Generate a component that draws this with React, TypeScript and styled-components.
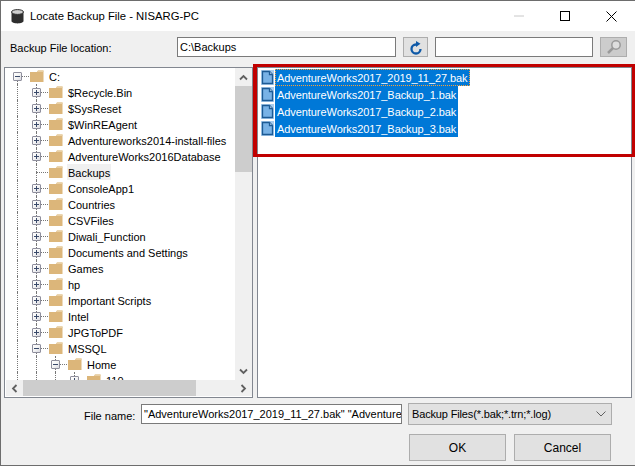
import React from "react";
import styled, { createGlobalStyle } from "styled-components";

const Global = createGlobalStyle`
  html, body { margin: 0; padding: 0; background: #f0f0f0; }
  * { box-sizing: border-box; }
`;

const Window = styled.div`
  position: relative;
  width: 635px;
  height: 466px;
  background: #f0f0f0;
  border: 1px solid #6d6d6d;
  border-right: 0;
  font-family: "Liberation Sans", Arial, sans-serif;
  font-size: 11px;
  color: #000;
  display: flex;
  flex-direction: column;
  overflow: hidden;
`;

const TitleBar = styled.div`
  height: 30px;
  background: #fff;
  display: flex;
  align-items: center;
  padding-left: 10px;
  flex: none;
`;
const TitleText = styled.span`
  margin-left: 6px;
  font-size: 11.3px;
`;
const WinButtons = styled.div`
  margin-left: auto;
  margin-right: 1px;
  display: flex;
  align-items: center;
`;
const WinBtn = styled.div`
  width: 46px;
  height: 30px;
  display: flex;
  align-items: center;
  justify-content: center;
`;

const LocationRow = styled.div`
  height: 36px;
  display: flex;
  align-items: center;
  padding: 0 0 4px 9px;
  flex: none;
`;
const Label = styled.span`
  width: 167px;
  flex: none;
  margin-top: 2px;
`;
const TextInput = styled.div<{ $w: number }>`
  width: ${(p) => p.$w}px;
  height: 20px;
  flex: none;
  background: #fff;
  border: 1px solid #7a7a7a;
  line-height: 18px;
  padding-left: 2px;
  white-space: nowrap;
  overflow: hidden;
`;
const IconBtn = styled.div<{ $w: number; $ml: number; $mr: number; $bg: string }>`
  width: ${(p) => p.$w}px;
  height: 20px;
  margin: 0 ${(p) => p.$mr}px 0 ${(p) => p.$ml}px;
  flex: none;
  background: ${(p) => p.$bg};
  border: 1px solid #adadad;
  display: flex;
  align-items: center;
  justify-content: center;
`;

const Panels = styled.div`
  display: flex;
  height: 331px;
  padding: 0 3px;
  gap: 4px;
  flex: none;
`;
const TreePanel = styled.div`
  width: 249px;
  height: 100%;
  border: 1px solid #828790;
  background: #fff;
  display: grid;
  grid-template-columns: 229px 17px;
  grid-template-rows: 312px 16px;
  padding: 0 0 1px 1px;
  flex: none;
`;
const FilePanel = styled.div`
  flex: 1;
  height: 100%;
  border: 1px solid #828790;
  background: #fff;
  padding: 1px 0 0 3px;
`;
const TreeView = styled.div`
  overflow: hidden;
  background: #fff;
`;
const Row = styled.div`
  height: 16px;
  display: flex;
  align-items: stretch;
`;
const Gutter = styled.div`
  width: 19px;
  flex: none;
  position: relative;
`;
const LeadGutter = styled(Gutter)`
  width: 4px;
`;
const Guide = styled.div`
  position: absolute;
  left: 7px;
  top: 0;
  bottom: 0;
  border-left: 1px dotted #777;
`;
const ElbowLine = styled.div<{ $lower: boolean }>`
  position: absolute;
  left: 7px;
  top: ${(p) => (p.$lower ? "8px" : "0")};
  height: 8px;
  border-left: 1px dotted #777;
`;
const ElbowTail = styled.div`
  position: absolute;
  left: 7px;
  right: -2px;
  top: 8px;
  border-top: 1px dotted #777;
`;
const Expander = styled.div`
  position: absolute;
  left: 3px;
  top: 4px;
  width: 9px;
  height: 9px;
  border: 1px solid #8f8f9d;
  border-radius: 1px;
  background: linear-gradient(135deg, #fff 0%, #f4f4f4 50%, #d9d9e0 100%);
  z-index: 1;
  &::before {
    content: "";
    position: absolute;
    left: 1px;
    right: 1px;
    top: 3px;
    height: 1px;
    background: #3a4a6a;
  }
`;
const PlusExpander = styled(Expander)`
  &::after {
    content: "";
    position: absolute;
    top: 1px;
    bottom: 1px;
    left: 3px;
    width: 1px;
    background: #3a4a6a;
  }
`;
const FolderBox = styled.div`
  width: 14px;
  margin-left: 1px;
  flex: none;
  z-index: 1;
`;
const NodeLabel = styled.span<{ $active: boolean }>`
  margin-left: 4px;
  padding: 0 1px;
  line-height: 18px;
  white-space: nowrap;
  background: ${(p) => (p.$active ? "#f0f0f0" : "transparent")};
`;
const FileRow = styled.div`
  height: 17px;
  display: flex;
  align-items: center;
`;
const FileLabel = styled.span<{ $focused: boolean }>`
  margin-left: 1px;
  height: 17px;
  line-height: 18px;
  padding: 0 2px;
  background: #0078d7;
  color: #fff;
  letter-spacing: -0.07px;
  white-space: nowrap;
  outline: ${(p) => (p.$focused ? "1px dotted #f6a23c" : "none")};
  outline-offset: -1px;
`;

const ScrollV = styled.div`
  background: #f0f0f0;
  display: flex;
  flex-direction: column;
`;
const ScrollH = styled.div`
  grid-column: 1 / 3;
  background: #f0f0f0;
  display: flex;
  align-items: stretch;
`;
const ArrowH = styled.div`
  flex: none;
  width: 17px;
  display: flex;
  align-items: center;
  justify-content: center;
`;
const ArrowV = styled.div`
  height: 18px;
  flex: none;
  display: flex;
  align-items: center;
  justify-content: center;
`;
const ThumbV = styled.div`
  height: 86px;
  flex: none;
  background: #cdcdcd;
`;
const TrackV = styled.div`
  flex: 1;
`;
const ThumbH = styled.div`
  width: 173px;
  flex: none;
  background: #cdcdcd;
`;
const TrackH = styled.div`
  flex: 1;
`;

const NameRow = styled.div`
  height: 36px;
  display: flex;
  align-items: center;
  padding: 0 0 4px 83px;
  flex: none;
`;
const NameLabel = styled.span`
  width: 57px;
  flex: none;
  margin-top: 3px;
`;
const Select = styled.div`
  width: 204px;
  height: 22px;
  margin-left: 6px;
  flex: none;
  background: #e1e1e1;
  border: 1px solid #adadad;
  display: flex;
  align-items: center;
  justify-content: space-between;
  padding: 0 5px 0 3px;
`;
const SelectText = styled.span`
  letter-spacing: -0.15px;
`;
const ActionRow = styled.div`
  display: flex;
  padding-left: 408px;
  gap: 8px;
`;
const ActionBtn = styled.div`
  width: 97px;
  height: 27px;
  background: #e1e1e1;
  border: 1px solid #adadad;
  display: flex;
  align-items: center;
  justify-content: center;
  font-size: 12px;
`;
const Highlight = styled.div`
  position: absolute;
  left: 252px;
  top: 63px;
  width: 382px;
  height: 93px;
  border: 3px solid #c00000;
  border-left-width: 4px;
  pointer-events: none;
`;

type Node = { label: string; level: number; exp: "+" | "-" | ""; active?: boolean };
const tree: Node[] = [
  { label: "C:", level: 0, exp: "-" },
  { label: "$Recycle.Bin", level: 1, exp: "+" },
  { label: "$SysReset", level: 1, exp: "+" },
  { label: "$WinREAgent", level: 1, exp: "+" },
  { label: "Adventureworks2014-install-files", level: 1, exp: "+" },
  { label: "AdventureWorks2016Database", level: 1, exp: "+" },
  { label: "Backups", level: 1, exp: "", active: true },
  { label: "ConsoleApp1", level: 1, exp: "+" },
  { label: "Countries", level: 1, exp: "+" },
  { label: "CSVFiles", level: 1, exp: "+" },
  { label: "Diwali_Function", level: 1, exp: "+" },
  { label: "Documents and Settings", level: 1, exp: "+" },
  { label: "Games", level: 1, exp: "+" },
  { label: "hp", level: 1, exp: "+" },
  { label: "Important Scripts", level: 1, exp: "+" },
  { label: "Intel", level: 1, exp: "+" },
  { label: "JPGToPDF", level: 1, exp: "+" },
  { label: "MSSQL", level: 1, exp: "-" },
  { label: "Home", level: 2, exp: "-" },
  { label: "110", level: 3, exp: "+" },
];

const files = [
  "AdventureWorks2017_2019_11_27.bak",
  "AdventureWorks2017_Backup_1.bak",
  "AdventureWorks2017_Backup_2.bak",
  "AdventureWorks2017_Backup_3.bak",
];

const Folder = () => (
  <svg width="14" height="16" viewBox="0 0 14 16" style={{ display: "block" }}>
    <path d="M0 4h7l1-1.5h5.5V14H0z" fill="#dcb67a" />
    <path d="M8 2.5h5.5v1.5H7z" fill="#e8cfa4" />
  </svg>
);

const FileIcon = () => (
  <svg width="13" height="15" viewBox="0 0 13 15" style={{ flex: "none" }}>
    <rect x="0" y="0" width="13" height="15" fill="#a8cdee" />
    <path d="M1.5 1.5h7l3 3v9h-10z" fill="#78b2e6" stroke="#1c5a94" strokeWidth="1.3" />
    <path d="M8.5 1.5v3h3" fill="#d6e8f8" stroke="#1c5a94" strokeWidth="1.3" />
  </svg>
);

const Chevron = ({ d }: { d: string }) => (
  <svg width="9" height="9" viewBox="0 0 9 9">
    <path d={d} fill="none" stroke="#606060" strokeWidth="1.8" />
  </svg>
);

const TreeRow = ({ n }: { n: Node }) => (
  <Row>
    <LeadGutter />
    {Array.from({ length: n.level }, (_, i) => (
      <Gutter key={i}>
        <Guide />
      </Gutter>
    ))}
    <Gutter>
      {n.level > 0 && <ElbowLine $lower={false} />}
      <ElbowTail />
      {n.label !== "110" && <ElbowLine $lower />}
      {n.exp === "+" && <PlusExpander />}
      {n.exp === "-" && <Expander />}
    </Gutter>
    <FolderBox>
      <Folder />
    </FolderBox>
    <NodeLabel $active={!!n.active}>{n.label}</NodeLabel>
  </Row>
);

export default function App() {
  return (
    <Window>
      <Global />
      <TitleBar>
        <svg width="13" height="15" viewBox="0 0 13 15">
          <path d="M0.5 3v9c0 1.4 2.7 2.4 6 2.4s6-1 6-2.4V3z" fill="#2e2e2e" />
          <ellipse cx="6.5" cy="3" rx="6" ry="2.4" fill="#cfcfcf" stroke="#2e2e2e" />
        </svg>
        <TitleText>Locate Backup File - NISARG-PC</TitleText>
        <WinButtons>
          <WinBtn>
            <svg width="10" height="2" viewBox="0 0 10 2">
              <path d="M0 1h10" stroke="#c8c8c8" />
            </svg>
          </WinBtn>
          <WinBtn>
            <svg width="10" height="10" viewBox="0 0 10 10">
              <rect x="0.5" y="0.5" width="9" height="9" fill="none" stroke="#000" />
            </svg>
          </WinBtn>
          <WinBtn>
            <svg width="11" height="11" viewBox="0 0 11 11">
              <path d="M0.5 0.5l10 10M10.5 0.5l-10 10" stroke="#000" />
            </svg>
          </WinBtn>
        </WinButtons>
      </TitleBar>

      <LocationRow>
        <Label>Backup File location:</Label>
        <TextInput $w={219}>C:\Backups</TextInput>
        <IconBtn $w={25} $ml={7} $mr={7} $bg="#e1e1e1">
          <svg width="14" height="15" viewBox="0 0 14 15">
            <path d="M7 4.5A4.5 4.5 0 1 0 11.5 9" fill="none" stroke="#0f5aa8" strokeWidth="2.3" />
            <path d="M7 1l4.5 2.8L7 7z" fill="#0f5aa8" />
          </svg>
        </IconBtn>
        <TextInput $w={158}></TextInput>
        <IconBtn $w={27} $ml={7} $mr={0} $bg="#cccccc">
          <svg width="16" height="16" viewBox="0 0 16 16">
            <circle cx="10" cy="6" r="4.2" fill="#dedede" stroke="#9a9a9a" strokeWidth="1.5" />
            <path d="M7 9l-5 5" stroke="#9a9a9a" strokeWidth="2.5" />
          </svg>
        </IconBtn>
      </LocationRow>

      <Panels>
        <TreePanel>
          <TreeView>
            {tree.map((n) => (
              <TreeRow key={n.label} n={n} />
            ))}
          </TreeView>
          <ScrollV>
            <ArrowV>
              <Chevron d="M1 6.5l3.5-3.5 3.5 3.5" />
            </ArrowV>
            <ThumbV />
            <TrackV />
            <ArrowV>
              <Chevron d="M1 2.5l3.5 3.5 3.5-3.5" />
            </ArrowV>
          </ScrollV>
          <ScrollH>
            <ArrowH>
              <Chevron d="M6.5 1L3 4.5 6.5 8" />
            </ArrowH>
            <ThumbH />
            <TrackH />
            <ArrowH>
              <Chevron d="M2.5 1L6 4.5 2.5 8" />
            </ArrowH>
          </ScrollH>
        </TreePanel>
        <FilePanel>
          {files.map((f, i) => (
            <FileRow key={f}>
              <FileIcon />
              <FileLabel $focused={i === 0}>{f}</FileLabel>
            </FileRow>
          ))}
        </FilePanel>
      </Panels>

      <NameRow>
        <NameLabel>File name:</NameLabel>
        <TextInput $w={261}>"AdventureWorks2017_2019_11_27.bak" "Adventure</TextInput>
        <Select>
          <SelectText>Backup Files(*.bak;*.trn;*.log)</SelectText>
          <svg width="10" height="6" viewBox="0 0 10 6">
            <path d="M0.5 0.5L5 5l4.5-4.5" fill="none" stroke="#606060" />
          </svg>
        </Select>
      </NameRow>

      <ActionRow>
        <ActionBtn>OK</ActionBtn>
        <ActionBtn>Cancel</ActionBtn>
      </ActionRow>

      <Highlight />
    </Window>
  );
}
